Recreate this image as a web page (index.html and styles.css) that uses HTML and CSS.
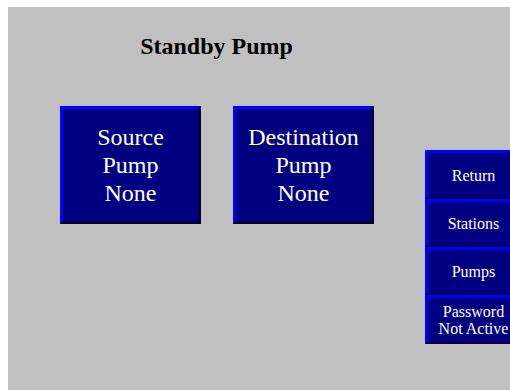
FILE: index.html
```html
<!DOCTYPE html>
<html lang="en">
<head>
    <meta charset="UTF-8">
    <meta name="viewport" content="width=device-width, initial-scale=1.0">
    <title>Standby Pump</title>
    <link rel="stylesheet" href="styles.css">
</head>
<body>
    <div id="screen">
        <div id="maincol">
            <h1 id="head">Standby Pump</h1>
            <div id="pumprow">
                <div class="pumpbox">Source<br>Pump<br>None</div>
                <div class="pumpbox">Destination<br>Pump<br>None</div>
            </div>
        </div>
        <div id="nav">
            <div class="navbtn">Return</div>
            <div class="navbtn">Stations</div>
            <div class="navbtn">Pumps</div>
            <div class="navbtn">Password<br>Not Active</div>
        </div>
    </div>
</body>
</html>
```

FILE: styles.css
```css
*{
    font-family: 'Liberation Serif', 'Times New Roman', serif;
    box-sizing: border-box;
}

html, body{
    overflow: hidden;
}

body{
    margin: 7px 0 0 8px;
    background-color: white;
}

#screen{
    background-color: #c0c0c0;
    width: 520px;
    height: 400px;
    display: flex;
}

#maincol{
    width: 417px;
    display: flex;
    flex-direction: column;
}

#head{
    margin: 0;
    padding-top: 25px;
    font-size: 24px;
    line-height: 28px;
    font-weight: bold;
    text-align: center;
    color: black;
}

#pumprow{
    display: flex;
    gap: 32px;
    margin-top: 46px;
    padding-left: 52px;
}

.pumpbox{
    width: 141px;
    height: 118px;
    background-color: #000080;
    border: 3px solid;
    border-color: #0000ff #00003c #00003c #0000ff;
    color: white;
    font-size: 24px;
    line-height: 28px;
    text-align: center;
    display: flex;
    align-items: center;
    justify-content: center;
}

#nav{
    margin-top: 143px;
    width: 96px;
    display: flex;
    flex-direction: column;
}

.navbtn{
    height: 48px;
    background-color: #000080;
    border: 3px solid;
    border-bottom-width: 2px;
    border-right-width: 2px;
    border-color: #0000ff #00003c #00003c #0000ff;
    color: white;
    font-size: 16px;
    line-height: 17px;
    text-align: center;
    display: flex;
    align-items: center;
    justify-content: center;
}

.navbtn:first-child, .navbtn:last-child{
    height: 49px;
}
```
